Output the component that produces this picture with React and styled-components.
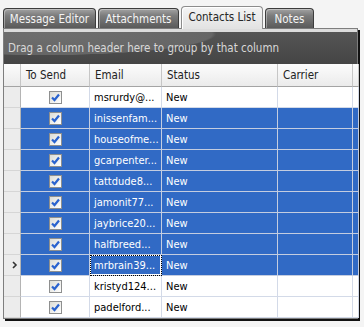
import React from 'react';
import styled, { createGlobalStyle, css } from 'styled-components';

const GlobalStyle = createGlobalStyle`
  html, body {
    margin: 0;
    padding: 0;
    background: #f4f4f4;
  }
  body {
    font-family: Tahoma, "DejaVu Sans Condensed", "Liberation Sans", sans-serif;
    font-size: 11px;
  }
`;

const Page = styled.div`
  width: 364px;
  height: 327px;
  padding: 6px 0 0 3px;
  box-sizing: border-box;
`;

const TabStrip = styled.div`
  display: flex;
  align-items: flex-end;
  height: 22px;
  position: relative;
  z-index: 2;
`;

const Tab = styled.div`
  box-sizing: border-box;
  width: ${(p) => p.$w}px;
  height: 20px;
  margin-right: 2px;
  display: flex;
  align-items: center;
  justify-content: center;
  border: 1px solid #3c3c3c;
  border-bottom: none;
  border-radius: 4px 4px 0 0;
  background: linear-gradient(#a2a2a2 0%, #7c7c7c 35%, #5a5a5a 100%);
  box-shadow: inset 1px 1px 0 rgba(255, 255, 255, 0.35);
  color: #f4f4f4;
  font-size: 11.5px;
  ${(p) =>
    p.$active &&
    css`
      height: 23px;
      margin-bottom: -1px;
      padding-bottom: 2px;
      border-color: #8c8c8c;
      background: linear-gradient(#f4f4f4, #e2e2e2);
      box-shadow: inset 1px 1px 0 #ffffff;
      color: #262626;
    `}
`;

const Frame = styled.div`
  width: 355px;
  box-sizing: border-box;
  border: 1px solid #7e7e7e;
  background: #dcdcdc;
  padding-top: 3px;
  box-shadow: 2px 2px 0 #111;
`;

const GroupPanel = styled.div`
  height: 32px;
  display: flex;
  align-items: center;
  padding-left: 4px;
  color: #d8d8d8;
  font-size: 11.5px;
  background:
    radial-gradient(ellipse 210px 26px at 40px 2px, #6e6e6e 0%, #666 80%, rgba(102, 102, 102, 0) 82%),
    linear-gradient(#555555, #454545);
`;

const Grid = styled.div`
  display: grid;
  grid-template-columns: 17px 69px 72px 116px 75px 1fr;
  background: #ffffff;
`;

const HeadCell = styled.div`
  box-sizing: border-box;
  height: 23px;
  display: flex;
  align-items: center;
  padding-left: 5px;
  border-right: 1px solid #c6c6c6;
  border-bottom: 1px solid #a4a4a4;
  background: linear-gradient(#fcfcfc, #ebebeb);
  color: #222;
  font-size: 11.5px;
  &:last-child {
    border-right: none;
  }
`;

const Cell = styled.div`
  box-sizing: border-box;
  height: 21px;
  display: flex;
  align-items: center;
  justify-content: ${(p) => (p.$center ? 'center' : 'flex-start')};
  padding-left: ${(p) => (p.$center ? 0 : 4)}px;
  border-right: 1px solid ${(p) => (p.$sel ? '#c4cde0' : '#d3dae8')};
  border-bottom: 1px solid ${(p) => (p.$sel ? '#c4cde0' : '#d3dae8')};
  background: ${(p) => (p.$sel ? '#316ac5' : '#ffffff')};
  color: ${(p) => (p.$sel ? '#ffffff' : '#000000')};
  font-size: 11px;
  white-space: nowrap;
  overflow: hidden;
  ${(p) =>
    p.$focus &&
    css`
      box-shadow: inset 0 0 0 1px #ffffff;
      outline: 1px dotted #000;
      outline-offset: -1px;
    `}
`;

const Indicator = styled.div`
  box-sizing: border-box;
  height: 21px;
  display: flex;
  align-items: center;
  padding-left: 8px;
  background: #ececec;
  border-right: 1px solid #b4b4b4;
  border-bottom: 1px solid #d6d6d6;
`;

const Check = styled.span`
  box-sizing: border-box;
  width: 13px;
  height: 13px;
  border: 1px solid #8e8f8f;
  background: linear-gradient(135deg, #dcdcd6, #ffffff);
  display: flex;
  align-items: center;
  justify-content: center;
`;

const rows = [
  ['msrurdy@...', false],
  ['inissenfam...', true],
  ['houseofme...', true],
  ['gcarpenter...', true],
  ['tattdude8...', true],
  ['jamonit77...', true],
  ['jaybrice20...', true],
  ['halfbreed...', true],
  ['mrbrain39...', true, true],
  ['kristyd124...', false],
  ['padelford...', false],
];

function CheckMark() {
  return (
    <Check>
      <svg width="9" height="9" viewBox="0 0 9 9">
        <path d="M1 4.5 L3.5 7 L8 1.5" fill="none" stroke="#2a63cf" strokeWidth="2.2" />
      </svg>
    </Check>
  );
}

function RowArrow() {
  return (
    <svg width="6" height="8" viewBox="0 0 6 8">
      <path d="M1 1 L4 4 L1 7" fill="none" stroke="#333" strokeWidth="1.6" />
    </svg>
  );
}

export default function App() {
  return (
    <Page>
      <GlobalStyle />
      <TabStrip>
        <Tab $w={93}>Message Editor</Tab>
        <Tab $w={81}>Attachments</Tab>
        <Tab $w={82} $active>Contacts List</Tab>
        <Tab $w={49}>Notes</Tab>
      </TabStrip>
      <Frame>
        <GroupPanel>Drag a column header here to group by that column</GroupPanel>
        <Grid>
          <HeadCell />
          <HeadCell>To Send</HeadCell>
          <HeadCell>Email</HeadCell>
          <HeadCell>Status</HeadCell>
          <HeadCell>Carrier</HeadCell>
          <HeadCell />
          {rows.map(([email, sel, current]) => (
            <React.Fragment key={email}>
              <Indicator>{current && <RowArrow />}</Indicator>
              <Cell $sel={sel} $center>
                <CheckMark />
              </Cell>
              <Cell $sel={sel} $focus={current}>{email}</Cell>
              <Cell $sel={sel}>New</Cell>
              <Cell $sel={sel} />
              <Cell $sel={sel} />
            </React.Fragment>
          ))}
        </Grid>
      </Frame>
    </Page>
  );
}
